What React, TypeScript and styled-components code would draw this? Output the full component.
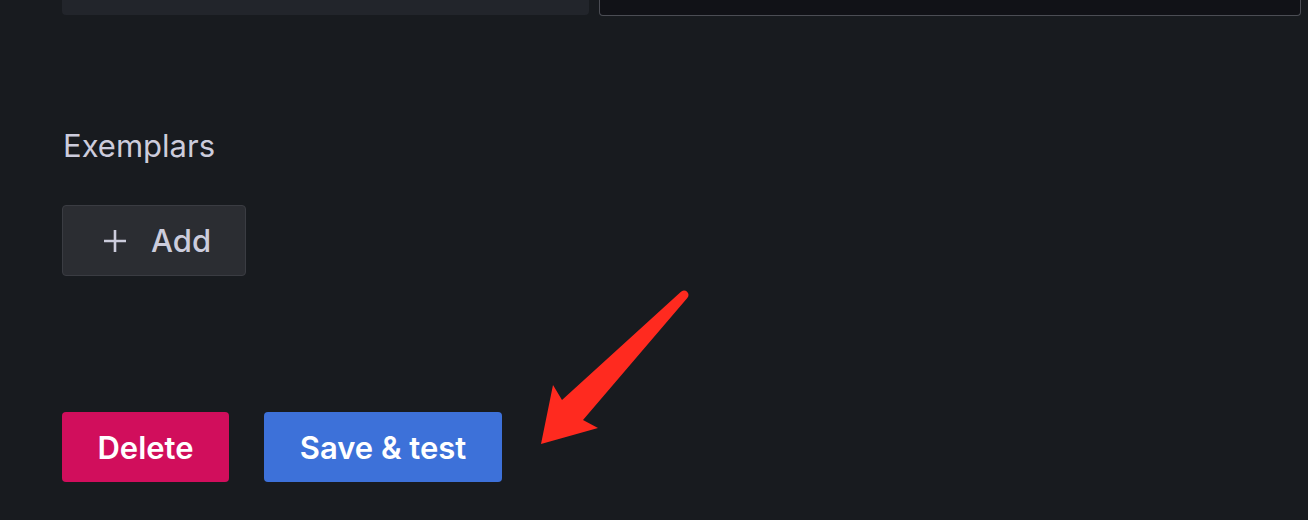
import styled, { createGlobalStyle } from "styled-components";

const Global = createGlobalStyle`
  html, body {
    margin: 0;
    background: #181b1f;
    font-family: Inter, "Noto Sans", sans-serif;
    color: #ccccdc;
  }
`;

export default function App() {
  return (
    <Page>
      <Global />
      <TopRow>
        <Panel />
        <Input />
      </TopRow>
      <Heading>Exemplars</Heading>
      <SecondaryButton>
        <PlusIcon viewBox="0 0 24 24">
          <path d="M12 1v22M1 12h22" />
        </PlusIcon>
        Add
      </SecondaryButton>
      <Actions>
        <ActionButton $variant="destructive">Delete</ActionButton>
        <ActionButton $variant="primary">Save &amp; test</ActionButton>
      </Actions>
      <Arrow viewBox="0 0 1308 520">
        <path d="M 680.7 291.9 L 562 400 L 553 385 L 541 444 L 598 428 L 583 420 L 687.3 298.1 A 4.5 4.5 0 0 0 680.7 291.9 Z" />
      </Arrow>
    </Page>
  );
}

const Page = styled.main`
  position: relative;
  width: 1308px;
  height: 520px;
  box-sizing: border-box;
  padding-left: 62px;
  overflow: hidden;
`;

const TopRow = styled.div`
  display: flex;
  gap: 10px;
  height: 16px;
`;

const Panel = styled.div`
  width: 527px;
  height: 15px;
  background: #22252b;
  border-radius: 0 0 4px 4px;
`;

const Input = styled.div`
  width: 700px;
  height: 15px;
  background: #111217;
  border: 1px solid #4b4d54;
  border-top: none;
  border-radius: 0 0 4px 4px;
`;

const Heading = styled.div`
  margin-top: 112px;
  font-size: 31px;
  line-height: 36px;
  font-weight: 400;
  padding-left: 1px;
`;

const SecondaryButton = styled.button`
  display: flex;
  align-items: center;
  gap: 24px;
  box-sizing: border-box;
  margin-top: 41px;
  width: 184px;
  height: 71px;
  padding: 0 0 0 40px;
  background: #2b2d32;
  border: 1px solid #3a3c42;
  border-radius: 4px;
  color: #ccccdc;
  font-family: inherit;
  font-size: 31px;
  font-weight: 500;
`;

const PlusIcon = styled.svg`
  width: 24px;
  height: 24px;
  fill: none;
  stroke: #ccccdc;
  stroke-width: 2.6;
`;

const Actions = styled.div`
  display: flex;
  gap: 35px;
  margin-top: 136px;
`;

const ActionButton = styled.button<{ $variant: "primary" | "destructive" }>`
  box-sizing: border-box;
  height: 70px;
  width: ${(p) => (p.$variant === "primary" ? "238px" : "167px")};
  padding: 0;
  border: none;
  border-radius: 4px;
  background: ${(p) => (p.$variant === "primary" ? "#3d71d9" : "#d10e5c")};
  color: #ffffff;
  font-family: inherit;
  font-size: 31px;
  font-weight: 600;
`;

const Arrow = styled.svg`
  position: absolute;
  left: 0;
  top: 0;
  width: 1308px;
  height: 520px;
  pointer-events: none;
  fill: #ff2a1f;
`;
